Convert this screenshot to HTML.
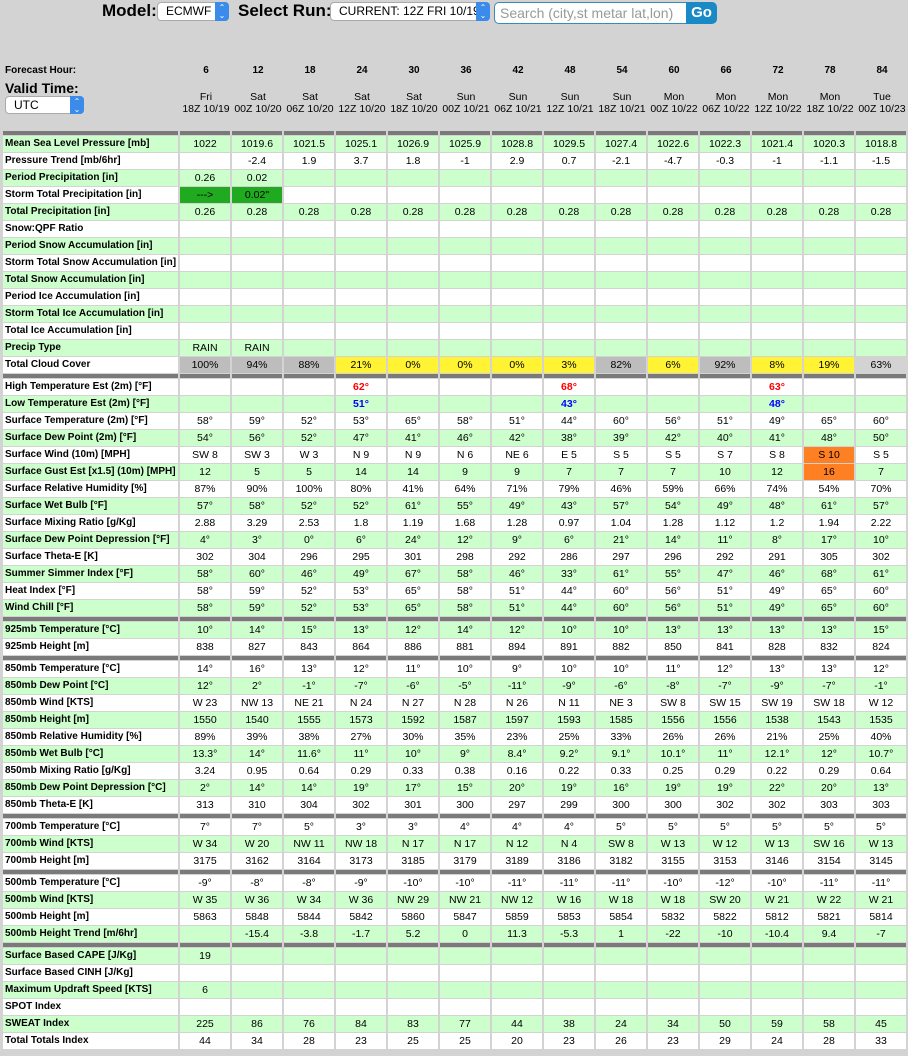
<!DOCTYPE html>
<html><head><meta charset="utf-8"><style>
body{margin:0;background:#d3d3d3;width:908px;height:1056px;overflow:hidden;position:relative;font-family:"Liberation Sans",Arial,sans-serif;color:#000}
.a{position:absolute;white-space:nowrap}
.sel{position:absolute;background:#fff;border:1px solid #aaa;border-radius:4px;font-size:12px;box-sizing:border-box;padding-left:8px;line-height:17px}
.sel i{position:absolute;right:-1px;top:-1px;bottom:-1px;width:14px;background:#3b8bea;border-radius:0 4px 4px 0;color:#fff;font-style:normal;font-size:8px;text-align:center;line-height:8px;padding-top:2px;box-sizing:border-box}
table{position:absolute;left:1px;top:130px;border-collapse:separate;border-spacing:2px 1px;table-layout:fixed;width:907px}
td,th{padding:0;height:16px;line-height:16px;font-size:10.5px;text-align:center;width:50px;white-space:nowrap;background:#fff;overflow:hidden}
th{text-align:left;padding-left:2px;font-weight:bold;font-size:10px}
tr.g td,tr.g th{background:#ccffcc}
tr.s td{height:4px;line-height:4px;background:#7a7a7a;font-size:0}
td.y{background:#fff333!important}td.k{background:#bdbdbd!important}td.l{background:#d3d3d3!important}
td.d{background:#1faa1f!important}td.o{background:#ff8022!important}
.r{color:#f00;font-weight:bold}.b{color:#00f;font-weight:bold}
.h{position:absolute;top:65px;font-weight:bold;font-size:10px;width:50px;text-align:center}
.dt{position:absolute;top:92px;font-size:10.5px;width:52px;text-align:center;line-height:11.5px}
</style></head><body>
<div class="a" style="left:102px;top:1px;font-size:17px;font-weight:bold">Model:</div>
<div class="sel" style="left:157px;top:2px;width:72px;height:19px">ECMWF<i>⌃<br>⌄</i></div>
<div class="a" style="left:238px;top:1px;font-size:17px;font-weight:bold">Select Run:</div>
<div class="sel" style="left:330px;top:2px;width:160px;height:19px">CURRENT: 12Z FRI 10/19<i>⌃<br>⌄</i></div>
<div class="a" style="left:494px;top:2px;width:194px;height:22px;background:#fff;border:1px solid #3a8ab8;border-radius:5px 0 0 5px;box-sizing:border-box;font-size:14px;color:#999;padding-left:5px;line-height:20px">Search (city,st metar lat,lon)</div>
<div class="a" style="left:686px;top:2px;width:31px;height:22px;background:#1a8ac6;border-radius:0 5px 5px 0;color:#fff;font-weight:bold;font-size:15px;text-align:center;line-height:22px">Go</div>
<div class="a" style="left:5px;top:65px;font-size:10px;font-weight:bold">Forecast Hour:</div>
<div class="a" style="left:5px;top:80px;font-size:14px;font-weight:bold">Valid Time:</div>
<div class="sel" style="left:5px;top:96px;width:79px;height:18px;font-size:12px">UTC<i>⌃<br>⌄</i></div>
<div class="h" style="left:181px">6</div><div class="h" style="left:233px">12</div><div class="h" style="left:285px">18</div><div class="h" style="left:337px">24</div><div class="h" style="left:389px">30</div><div class="h" style="left:441px">36</div><div class="h" style="left:493px">42</div><div class="h" style="left:545px">48</div><div class="h" style="left:597px">54</div><div class="h" style="left:649px">60</div><div class="h" style="left:701px">66</div><div class="h" style="left:753px">72</div><div class="h" style="left:805px">78</div><div class="h" style="left:857px">84</div>
<div class="dt" style="left:180px">Fri<br>18Z 10/19</div><div class="dt" style="left:232px">Sat<br>00Z 10/20</div><div class="dt" style="left:284px">Sat<br>06Z 10/20</div><div class="dt" style="left:336px">Sat<br>12Z 10/20</div><div class="dt" style="left:388px">Sat<br>18Z 10/20</div><div class="dt" style="left:440px">Sun<br>00Z 10/21</div><div class="dt" style="left:492px">Sun<br>06Z 10/21</div><div class="dt" style="left:544px">Sun<br>12Z 10/21</div><div class="dt" style="left:596px">Sun<br>18Z 10/21</div><div class="dt" style="left:648px">Mon<br>00Z 10/22</div><div class="dt" style="left:700px">Mon<br>06Z 10/22</div><div class="dt" style="left:752px">Mon<br>12Z 10/22</div><div class="dt" style="left:804px">Mon<br>18Z 10/22</div><div class="dt" style="left:856px">Tue<br>00Z 10/23</div>
<table>
<tr class="s"><td style="width:175px"></td><td></td><td></td><td></td><td></td><td></td><td></td><td></td><td></td><td></td><td></td><td></td><td></td><td></td><td></td></tr>
<tr class="g"><th>Mean Sea Level Pressure [mb]</th><td>1022</td><td>1019.6</td><td>1021.5</td><td>1025.1</td><td>1026.9</td><td>1025.9</td><td>1028.8</td><td>1029.5</td><td>1027.4</td><td>1022.6</td><td>1022.3</td><td>1021.4</td><td>1020.3</td><td>1018.8</td></tr>
<tr><th>Pressure Trend [mb/6hr]</th><td></td><td>-2.4</td><td>1.9</td><td>3.7</td><td>1.8</td><td>-1</td><td>2.9</td><td>0.7</td><td>-2.1</td><td>-4.7</td><td>-0.3</td><td>-1</td><td>-1.1</td><td>-1.5</td></tr>
<tr class="g"><th>Period Precipitation [in]</th><td>0.26</td><td>0.02</td><td></td><td></td><td></td><td></td><td></td><td></td><td></td><td></td><td></td><td></td><td></td><td></td></tr>
<tr><th>Storm Total Precipitation [in]</th><td class="d">---&gt;</td><td class="d">0.02"</td><td></td><td></td><td></td><td></td><td></td><td></td><td></td><td></td><td></td><td></td><td></td><td></td></tr>
<tr class="g"><th>Total Precipitation [in]</th><td>0.26</td><td>0.28</td><td>0.28</td><td>0.28</td><td>0.28</td><td>0.28</td><td>0.28</td><td>0.28</td><td>0.28</td><td>0.28</td><td>0.28</td><td>0.28</td><td>0.28</td><td>0.28</td></tr>
<tr><th>Snow:QPF Ratio</th><td></td><td></td><td></td><td></td><td></td><td></td><td></td><td></td><td></td><td></td><td></td><td></td><td></td><td></td></tr>
<tr class="g"><th>Period Snow Accumulation [in]</th><td></td><td></td><td></td><td></td><td></td><td></td><td></td><td></td><td></td><td></td><td></td><td></td><td></td><td></td></tr>
<tr><th>Storm Total Snow Accumulation [in]</th><td></td><td></td><td></td><td></td><td></td><td></td><td></td><td></td><td></td><td></td><td></td><td></td><td></td><td></td></tr>
<tr class="g"><th>Total Snow Accumulation [in]</th><td></td><td></td><td></td><td></td><td></td><td></td><td></td><td></td><td></td><td></td><td></td><td></td><td></td><td></td></tr>
<tr><th>Period Ice Accumulation [in]</th><td></td><td></td><td></td><td></td><td></td><td></td><td></td><td></td><td></td><td></td><td></td><td></td><td></td><td></td></tr>
<tr class="g"><th>Storm Total Ice Accumulation [in]</th><td></td><td></td><td></td><td></td><td></td><td></td><td></td><td></td><td></td><td></td><td></td><td></td><td></td><td></td></tr>
<tr><th>Total Ice Accumulation [in]</th><td></td><td></td><td></td><td></td><td></td><td></td><td></td><td></td><td></td><td></td><td></td><td></td><td></td><td></td></tr>
<tr class="g"><th>Precip Type</th><td>RAIN</td><td>RAIN</td><td></td><td></td><td></td><td></td><td></td><td></td><td></td><td></td><td></td><td></td><td></td><td></td></tr>
<tr><th>Total Cloud Cover</th><td class="k">100%</td><td class="k">94%</td><td class="k">88%</td><td class="y">21%</td><td class="y">0%</td><td class="y">0%</td><td class="y">0%</td><td class="y">3%</td><td class="k">82%</td><td class="y">6%</td><td class="k">92%</td><td class="y">8%</td><td class="y">19%</td><td class="l">63%</td></tr>
<tr class="s"><td></td><td></td><td></td><td></td><td></td><td></td><td></td><td></td><td></td><td></td><td></td><td></td><td></td><td></td><td></td></tr>
<tr><th>High Temperature Est (2m) [°F]</th><td></td><td></td><td></td><td class="r">62°</td><td></td><td></td><td></td><td class="r">68°</td><td></td><td></td><td></td><td class="r">63°</td><td></td><td></td></tr>
<tr class="g"><th>Low Temperature Est (2m) [°F]</th><td></td><td></td><td></td><td class="b">51°</td><td></td><td></td><td></td><td class="b">43°</td><td></td><td></td><td></td><td class="b">48°</td><td></td><td></td></tr>
<tr><th>Surface Temperature (2m) [°F]</th><td>58°</td><td>59°</td><td>52°</td><td>53°</td><td>65°</td><td>58°</td><td>51°</td><td>44°</td><td>60°</td><td>56°</td><td>51°</td><td>49°</td><td>65°</td><td>60°</td></tr>
<tr class="g"><th>Surface Dew Point (2m) [°F]</th><td>54°</td><td>56°</td><td>52°</td><td>47°</td><td>41°</td><td>46°</td><td>42°</td><td>38°</td><td>39°</td><td>42°</td><td>40°</td><td>41°</td><td>48°</td><td>50°</td></tr>
<tr><th>Surface Wind (10m) [MPH]</th><td>SW 8</td><td>SW 3</td><td>W 3</td><td>N 9</td><td>N 9</td><td>N 6</td><td>NE 6</td><td>E 5</td><td>S 5</td><td>S 5</td><td>S 7</td><td>S 8</td><td class="o">S 10</td><td>S 5</td></tr>
<tr class="g"><th>Surface Gust Est [x1.5] (10m) [MPH]</th><td>12</td><td>5</td><td>5</td><td>14</td><td>14</td><td>9</td><td>9</td><td>7</td><td>7</td><td>7</td><td>10</td><td>12</td><td class="o">16</td><td>7</td></tr>
<tr><th>Surface Relative Humidity [%]</th><td>87%</td><td>90%</td><td>100%</td><td>80%</td><td>41%</td><td>64%</td><td>71%</td><td>79%</td><td>46%</td><td>59%</td><td>66%</td><td>74%</td><td>54%</td><td>70%</td></tr>
<tr class="g"><th>Surface Wet Bulb [°F]</th><td>57°</td><td>58°</td><td>52°</td><td>52°</td><td>61°</td><td>55°</td><td>49°</td><td>43°</td><td>57°</td><td>54°</td><td>49°</td><td>48°</td><td>61°</td><td>57°</td></tr>
<tr><th>Surface Mixing Ratio [g/Kg]</th><td>2.88</td><td>3.29</td><td>2.53</td><td>1.8</td><td>1.19</td><td>1.68</td><td>1.28</td><td>0.97</td><td>1.04</td><td>1.28</td><td>1.12</td><td>1.2</td><td>1.94</td><td>2.22</td></tr>
<tr class="g"><th>Surface Dew Point Depression [°F]</th><td>4°</td><td>3°</td><td>0°</td><td>6°</td><td>24°</td><td>12°</td><td>9°</td><td>6°</td><td>21°</td><td>14°</td><td>11°</td><td>8°</td><td>17°</td><td>10°</td></tr>
<tr><th>Surface Theta-E [K]</th><td>302</td><td>304</td><td>296</td><td>295</td><td>301</td><td>298</td><td>292</td><td>286</td><td>297</td><td>296</td><td>292</td><td>291</td><td>305</td><td>302</td></tr>
<tr class="g"><th>Summer Simmer Index [°F]</th><td>58°</td><td>60°</td><td>46°</td><td>49°</td><td>67°</td><td>58°</td><td>46°</td><td>33°</td><td>61°</td><td>55°</td><td>47°</td><td>46°</td><td>68°</td><td>61°</td></tr>
<tr><th>Heat Index [°F]</th><td>58°</td><td>59°</td><td>52°</td><td>53°</td><td>65°</td><td>58°</td><td>51°</td><td>44°</td><td>60°</td><td>56°</td><td>51°</td><td>49°</td><td>65°</td><td>60°</td></tr>
<tr class="g"><th>Wind Chill [°F]</th><td>58°</td><td>59°</td><td>52°</td><td>53°</td><td>65°</td><td>58°</td><td>51°</td><td>44°</td><td>60°</td><td>56°</td><td>51°</td><td>49°</td><td>65°</td><td>60°</td></tr>
<tr class="s"><td></td><td></td><td></td><td></td><td></td><td></td><td></td><td></td><td></td><td></td><td></td><td></td><td></td><td></td><td></td></tr>
<tr class="g"><th>925mb Temperature [°C]</th><td>10°</td><td>14°</td><td>15°</td><td>13°</td><td>12°</td><td>14°</td><td>12°</td><td>10°</td><td>10°</td><td>13°</td><td>13°</td><td>13°</td><td>13°</td><td>15°</td></tr>
<tr><th>925mb Height [m]</th><td>838</td><td>827</td><td>843</td><td>864</td><td>886</td><td>881</td><td>894</td><td>891</td><td>882</td><td>850</td><td>841</td><td>828</td><td>832</td><td>824</td></tr>
<tr class="s"><td></td><td></td><td></td><td></td><td></td><td></td><td></td><td></td><td></td><td></td><td></td><td></td><td></td><td></td><td></td></tr>
<tr><th>850mb Temperature [°C]</th><td>14°</td><td>16°</td><td>13°</td><td>12°</td><td>11°</td><td>10°</td><td>9°</td><td>10°</td><td>10°</td><td>11°</td><td>12°</td><td>13°</td><td>13°</td><td>12°</td></tr>
<tr class="g"><th>850mb Dew Point [°C]</th><td>12°</td><td>2°</td><td>-1°</td><td>-7°</td><td>-6°</td><td>-5°</td><td>-11°</td><td>-9°</td><td>-6°</td><td>-8°</td><td>-7°</td><td>-9°</td><td>-7°</td><td>-1°</td></tr>
<tr><th>850mb Wind [KTS]</th><td>W 23</td><td>NW 13</td><td>NE 21</td><td>N 24</td><td>N 27</td><td>N 28</td><td>N 26</td><td>N 11</td><td>NE 3</td><td>SW 8</td><td>SW 15</td><td>SW 19</td><td>SW 18</td><td>W 12</td></tr>
<tr class="g"><th>850mb Height [m]</th><td>1550</td><td>1540</td><td>1555</td><td>1573</td><td>1592</td><td>1587</td><td>1597</td><td>1593</td><td>1585</td><td>1556</td><td>1556</td><td>1538</td><td>1543</td><td>1535</td></tr>
<tr><th>850mb Relative Humidity [%]</th><td>89%</td><td>39%</td><td>38%</td><td>27%</td><td>30%</td><td>35%</td><td>23%</td><td>25%</td><td>33%</td><td>26%</td><td>26%</td><td>21%</td><td>25%</td><td>40%</td></tr>
<tr class="g"><th>850mb Wet Bulb [°C]</th><td>13.3°</td><td>14°</td><td>11.6°</td><td>11°</td><td>10°</td><td>9°</td><td>8.4°</td><td>9.2°</td><td>9.1°</td><td>10.1°</td><td>11°</td><td>12.1°</td><td>12°</td><td>10.7°</td></tr>
<tr><th>850mb Mixing Ratio [g/Kg]</th><td>3.24</td><td>0.95</td><td>0.64</td><td>0.29</td><td>0.33</td><td>0.38</td><td>0.16</td><td>0.22</td><td>0.33</td><td>0.25</td><td>0.29</td><td>0.22</td><td>0.29</td><td>0.64</td></tr>
<tr class="g"><th>850mb Dew Point Depression [°C]</th><td>2°</td><td>14°</td><td>14°</td><td>19°</td><td>17°</td><td>15°</td><td>20°</td><td>19°</td><td>16°</td><td>19°</td><td>19°</td><td>22°</td><td>20°</td><td>13°</td></tr>
<tr><th>850mb Theta-E [K]</th><td>313</td><td>310</td><td>304</td><td>302</td><td>301</td><td>300</td><td>297</td><td>299</td><td>300</td><td>300</td><td>302</td><td>302</td><td>303</td><td>303</td></tr>
<tr class="s"><td></td><td></td><td></td><td></td><td></td><td></td><td></td><td></td><td></td><td></td><td></td><td></td><td></td><td></td><td></td></tr>
<tr><th>700mb Temperature [°C]</th><td>7°</td><td>7°</td><td>5°</td><td>3°</td><td>3°</td><td>4°</td><td>4°</td><td>4°</td><td>5°</td><td>5°</td><td>5°</td><td>5°</td><td>5°</td><td>5°</td></tr>
<tr class="g"><th>700mb Wind [KTS]</th><td>W 34</td><td>W 20</td><td>NW 11</td><td>NW 18</td><td>N 17</td><td>N 17</td><td>N 12</td><td>N 4</td><td>SW 8</td><td>W 13</td><td>W 12</td><td>W 13</td><td>SW 16</td><td>W 13</td></tr>
<tr><th>700mb Height [m]</th><td>3175</td><td>3162</td><td>3164</td><td>3173</td><td>3185</td><td>3179</td><td>3189</td><td>3186</td><td>3182</td><td>3155</td><td>3153</td><td>3146</td><td>3154</td><td>3145</td></tr>
<tr class="s"><td></td><td></td><td></td><td></td><td></td><td></td><td></td><td></td><td></td><td></td><td></td><td></td><td></td><td></td><td></td></tr>
<tr><th>500mb Temperature [°C]</th><td>-9°</td><td>-8°</td><td>-8°</td><td>-9°</td><td>-10°</td><td>-10°</td><td>-11°</td><td>-11°</td><td>-11°</td><td>-10°</td><td>-12°</td><td>-10°</td><td>-11°</td><td>-11°</td></tr>
<tr class="g"><th>500mb Wind [KTS]</th><td>W 35</td><td>W 36</td><td>W 34</td><td>W 36</td><td>NW 29</td><td>NW 21</td><td>NW 12</td><td>W 16</td><td>W 18</td><td>W 18</td><td>SW 20</td><td>W 21</td><td>W 22</td><td>W 21</td></tr>
<tr><th>500mb Height [m]</th><td>5863</td><td>5848</td><td>5844</td><td>5842</td><td>5860</td><td>5847</td><td>5859</td><td>5853</td><td>5854</td><td>5832</td><td>5822</td><td>5812</td><td>5821</td><td>5814</td></tr>
<tr class="g"><th>500mb Height Trend [m/6hr]</th><td></td><td>-15.4</td><td>-3.8</td><td>-1.7</td><td>5.2</td><td>0</td><td>11.3</td><td>-5.3</td><td>1</td><td>-22</td><td>-10</td><td>-10.4</td><td>9.4</td><td>-7</td></tr>
<tr class="s"><td></td><td></td><td></td><td></td><td></td><td></td><td></td><td></td><td></td><td></td><td></td><td></td><td></td><td></td><td></td></tr>
<tr class="g"><th>Surface Based CAPE [J/Kg]</th><td>19</td><td></td><td></td><td></td><td></td><td></td><td></td><td></td><td></td><td></td><td></td><td></td><td></td><td></td></tr>
<tr><th>Surface Based CINH [J/Kg]</th><td></td><td></td><td></td><td></td><td></td><td></td><td></td><td></td><td></td><td></td><td></td><td></td><td></td><td></td></tr>
<tr class="g"><th>Maximum Updraft Speed [KTS]</th><td>6</td><td></td><td></td><td></td><td></td><td></td><td></td><td></td><td></td><td></td><td></td><td></td><td></td><td></td></tr>
<tr><th>SPOT Index</th><td></td><td></td><td></td><td></td><td></td><td></td><td></td><td></td><td></td><td></td><td></td><td></td><td></td><td></td></tr>
<tr class="g"><th>SWEAT Index</th><td>225</td><td>86</td><td>76</td><td>84</td><td>83</td><td>77</td><td>44</td><td>38</td><td>24</td><td>34</td><td>50</td><td>59</td><td>58</td><td>45</td></tr>
<tr><th>Total Totals Index</th><td>44</td><td>34</td><td>28</td><td>23</td><td>25</td><td>25</td><td>20</td><td>23</td><td>26</td><td>23</td><td>29</td><td>24</td><td>28</td><td>33</td></tr>
</table>
</body></html>
